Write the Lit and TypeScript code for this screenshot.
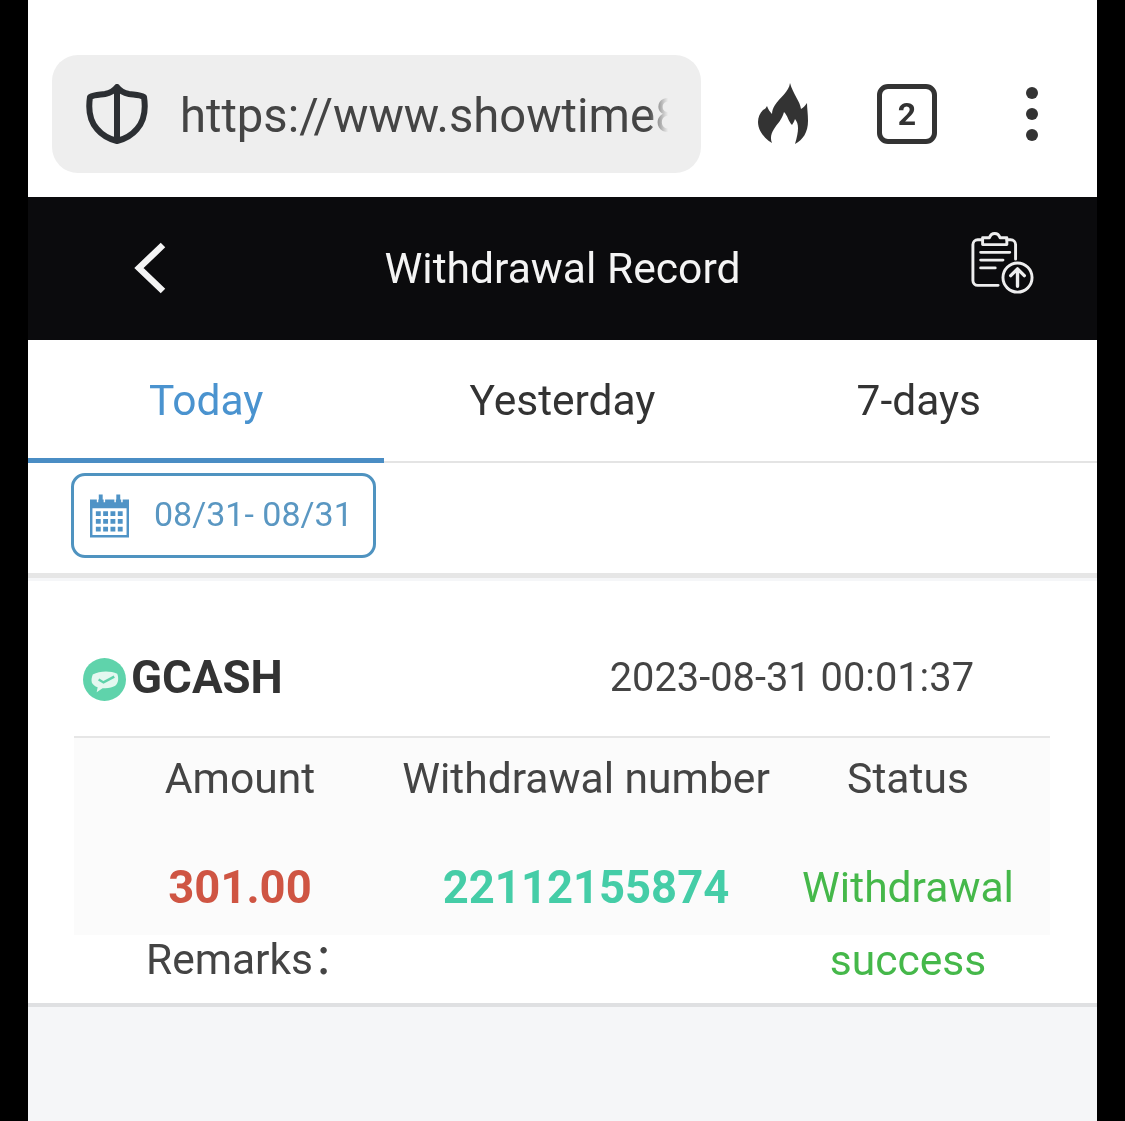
import { LitElement, html, css } from "lit";
import { customElement } from "lit/decorators.js";

@customElement("app-root")
export class AppRoot extends LitElement {
  static styles = css`
    :host { display: block; height: 1121px; background: #000; font-family: Roboto, "Liberation Sans", sans-serif; color: #3a3a3a; overflow: hidden; }
    .page { margin: 0 28px; height: 1121px; background: #f5f6f8; display: flex; flex-direction: column; filter: blur(0.6px); }
    .browser { height: 197px; background: #fff; box-sizing: border-box; padding: 55px 0 24px 24px; display: flex; align-items: center; flex: none; }
    .pill { width: 649px; height: 118px; background: #eee; border-radius: 26px; display: flex; align-items: center; box-sizing: border-box; padding-left: 34px; flex: none; }
    .shield { width: 62px; height: 60px; flex: none; display: block; }
    .url { margin-left: 32px; padding-top: 4px; width: 488px; overflow: hidden; white-space: nowrap; font-size: 47.2px; color: #444; line-height: 60px; -webkit-mask-image: linear-gradient(to right, #000 96%, transparent 100%); mask-image: linear-gradient(to right, #000 96%, transparent 100%); }
    .flame { width: 50px; height: 62px; margin-left: 57px; flex: none; display: block; }
    .tabs-count { width: 60px; height: 60px; margin-left: 69px; box-sizing: border-box; border: 5px solid #333; border-radius: 11px; display: flex; align-items: center; justify-content: center; font-size: 32px; font-weight: 700; color: #333; flex: none; }
    .dots { margin-left: 89px; display: flex; flex-direction: column; gap: 9px; flex: none; }
    .dots i { display: block; width: 12px; height: 12px; border-radius: 50%; background: #333; }
    .head { height: 143px; background: #0b0b0d; display: grid; grid-template-columns: 1fr auto 1fr; align-items: center; color: #f4f4f4; flex: none; }
    .back { width: 36px; height: 54px; margin-left: 105px; margin-top: -2px; display: block; }
    .title { font-size: 42.6px; line-height: 50px; margin-top: -1px; }
    .clip { width: 64px; height: 64px; justify-self: end; margin-right: 63px; margin-top: -9px; display: block; }
    .tabs { height: 123px; background: #fff; display: grid; grid-template-columns: repeat(3, 1fr); box-sizing: border-box; border-bottom: 2px solid #e4e4e4; flex: none; }
    .tab { display: flex; align-items: center; justify-content: center; font-size: 42.5px; color: #333; padding-bottom: 2px; margin-bottom: -2px; box-sizing: border-box; }
    .tab.on { color: #4a93cf; box-shadow: inset 0 -5px 0 #4a8dc4; }
    .filter { height: 115px; background: #fff; box-sizing: border-box; padding: 10px 43px 0; border-bottom: 5px solid #e6e6e6; flex: none; }
    .chip { width: 305px; height: 85px; box-sizing: border-box; border: 3px solid #4f93c0; border-radius: 14px; display: flex; align-items: center; padding-left: 16px; color: #5a97c2; font-size: 34px; gap: 25px; }
    .chip span { margin-top: -4px; }
    .cal { width: 39px; height: 44px; display: block; flex: none; }
    .card { height: 426px; margin-top: 3px; background: #fff; border-bottom: 4px solid #dfe0e2; box-sizing: border-box; padding: 0 47px 0 46px; flex: none; }
    .top { height: 157px; box-sizing: border-box; border-bottom: 2px solid #e6e6e6; display: flex; align-items: center; padding: 38px 76px 0 9px; }
    .gc { width: 43px; height: 43px; flex: none; display: block; margin-top: 4px; }
    .name { font-size: 45.6px; font-weight: 700; color: #333; margin-left: 5px; flex: 1; }
    .time { font-size: 39.8px; color: #444; }
    .grid { display: grid; grid-template-columns: 332px 360px 1fr; grid-template-rows: 82px 115px; font-size: 42.6px; color: #444; text-align: center; }
    .shade { grid-column: 1 / -1; grid-row: 1 / 3; background: #fbfbfb; }
    .h { grid-row: 1; line-height: 80px; white-space: nowrap; justify-self: center; }
    .c1 { grid-column: 1; }
    .c2 { grid-column: 2; }
    .c3 { grid-column: 3; }
    .val { grid-row: 2; line-height: 54px; margin-top: 41px; font-weight: 700; font-size: 45.4px; }
    .red { color: #cf5543; }
    .teal { color: #45cda7; }
    .status { grid-row: 2; grid-column: 3; font-size: 42.6px; color: #45b84a; line-height: 73px; margin-top: 31px; }
    .rem { text-align: left; padding-left: 72px; line-height: 50px; font-size: 42.5px; color: #444; font-family: Roboto, "Noto Sans CJK SC", sans-serif; }
  `;

  render() {
    return html`<div class="page">
      <div class="browser">
        <div class="pill">
          <svg class="shield" viewBox="0 0 62 60" fill="none" stroke="#2c2f33" stroke-width="6" stroke-linejoin="round">
            <path d="M31 3c3 4 7 6 12 7 5 .8 11 .6 15 3 2 13 0 24-7 32-5 6-12 10-20 12-8-2-15-6-20-12C4 37 2 26 4 13c4-2.400 10-2.200 15-3 5-1 9-3 12-7Z"/>
            <path d="M31 3v54"/>
          </svg>
          <div class="url">https://www.showtime888.com</div>
        </div>
        <svg class="flame" viewBox="0 0 50 62"><path fill="#333" fill-rule="evenodd" d="M32 0c-1 9-10 14-15 22-2 3-3 6-3 9-2-2-4-5-5-8-1 2-2 3-4 4C2 30 0 34 0 39c0 9 7 17 14 21-2-5-1-9 2-14 3-5 8-9 10-17 4 4 4 9 8 13 1-2 2-3 3-6 4 5 4 11 0 25 8-4 13-12 13-23 0-7-1-13-1-18-2 3-4 5-6 6C42 18 35 11 32 0Z"/></svg>
        <div class="tabs-count">2</div>
        <div class="dots"><i></i><i></i><i></i></div>
      </div>
      <div class="head">
        <svg class="back" viewBox="0 0 36 54" fill="none" stroke="#f4f4f4" stroke-width="6.500"><path d="M30 4 6 27l24 23"/></svg>
        <div class="title">Withdrawal Record</div>
        <svg class="clip" viewBox="0 0 66 66" fill="none" stroke="#eee" stroke-width="3" stroke-linecap="round" stroke-linejoin="round">
          <path d="M13 8H8a5 5 0 0 0-5 5v37a5 5 0 0 0 5 5h21M38 8h4a5 5 0 0 1 5 5v15"/>
          <path d="M13 6h7c1-3 3-4.500 5.500-4.500S30 3 31 6h7v7H13Z"/>
          <path d="M11 21h30M11 29h23M11 37h15"/>
          <circle cx="49" cy="47" r="15"/>
          <path d="M49 56V39M42 45l7-7 7 7" stroke-width="3.500"/>
        </svg>
      </div>
      <div class="tabs">
        <div class="tab on">Today</div>
        <div class="tab">Yesterday</div>
        <div class="tab">7-days</div>
      </div>
      <div class="filter">
        <div class="chip">
          <svg class="cal" viewBox="0 0 40 44">
            <path fill="#4f93c6" d="M0 5h40v39H0Z"/>
            <path fill="#4f93c6" d="M9 0h4v6H9zM27 0h4v6h-4z"/>
            <path fill="#fff" d="M2.500 14h35v27.500h-35Z"/>
            <path fill="#fff" d="M7 3h1.500v5H7zM14 3h1.500v5H14zM25 3h1.500v5H25zM32 3h1.500v5H32z"/>
            <path fill="#4f93c6" d="M6 17h5v5H6zM13.500 17h5v5h-5zM21 17h5v5h-5zM28.500 17h5v5h-5zM6 25h5v5H6zM13.500 25h5v5h-5zM21 25h5v5h-5zM28.500 25h5v5h-5zM6 33h5v5H6zM13.500 33h5v5h-5zM21 33h5v5h-5zM28.500 33h5v5h-5z"/>
          </svg>
          <span>08/31- 08/31</span>
        </div>
      </div>
      <div class="card">
        <div class="top">
          <svg class="gc" viewBox="0 0 44 44">
            <circle cx="22" cy="22" r="22" fill="#5fd3ab"/>
            <path fill="#e4f8f0" d="M10 17c7-4 18-4 25-1 2 5 1 11-3 13-5 2-8 2-12 2l-6 4 1-5c-3-1-5-3-6-5-.7-3 0-5 1-8Z"/>
            <path fill="none" stroke="#5fd3ab" stroke-width="2.500" d="m16 22 5 3 11-6"/>
          </svg>
          <div class="name">GCASH</div>
          <div class="time">2023-08-31 00:01:37</div>
        </div>
        <div class="grid">
          <div class="shade"></div>
          <div class="h c1">Amount</div>
          <div class="h c2">Withdrawal number</div>
          <div class="h c3">Status</div>
          <div class="val c1 red">301.00</div>
          <div class="val c2 teal">22112155874</div>
          <div class="status">Withdrawal<br />success</div>
        </div>
        <div class="rem">Remarks：</div>
      </div>
    </div>`;
  }
}
